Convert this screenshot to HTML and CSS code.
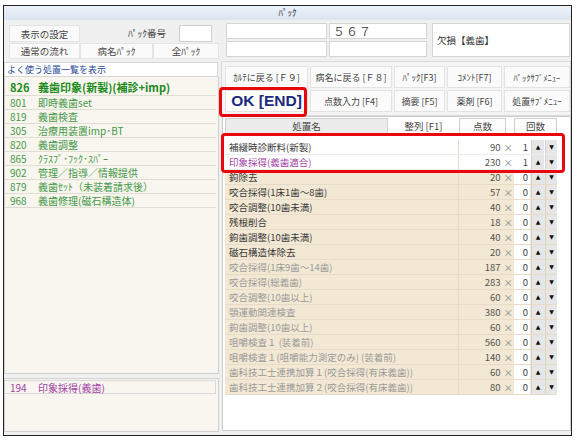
FILE: index.html
```html
<!DOCTYPE html>
<html lang="ja">
<head>
  <meta charset="UTF-8" />
  <title>ﾊﾟｯｸ</title>
  <link rel="stylesheet" href="styles.css">
</head>
<body>
  <div class="window">
    <div class="titlebar">ﾊﾟｯｸ</div>
    <div class="main">

      <div class="left">
        <div class="setrow">
          <div class="cell w71">表示の設定</div>
          <div class="label">ﾊﾟｯｸ番号</div>
          <div class="input"></div>
        </div>
        <div class="setrow second">
          <div class="cell w71">通常の流れ</div>
          <div class="cell w73">病名ﾊﾟｯｸ</div>
          <div class="cell w66">全ﾊﾟｯｸ</div>
        </div>
        <div class="linkbar">よく使う処置一覧を表示</div>

        <div class="list">
          <div class="item head"><span class="code">826</span><span>義歯印象(新製)(補診+imp)</span></div>
          <div class="item"><span class="code">801</span><span>即時義歯set</span></div>
          <div class="item"><span class="code">819</span><span>義歯検査</span></div>
          <div class="item"><span class="code">305</span><span>治療用装置imp･BT</span></div>
          <div class="item"><span class="code">820</span><span>義歯調整</span></div>
          <div class="item"><span class="code">865</span><span>ｸﾗｽﾌﾟ･ﾌｯｸ･ｽﾊﾟｰ</span></div>
          <div class="item"><span class="code">902</span><span>管理／指導／情報提供</span></div>
          <div class="item"><span class="code">879</span><span>義歯ｾｯﾄ（未装着請求後）</span></div>
          <div class="item"><span class="code">968</span><span>義歯修理(磁石構造体)</span></div>
        </div>

        <div class="sublist">
          <div class="item picked"><span class="code">194</span><span>印象採得(義歯)</span></div>
        </div>
      </div>

      <div class="right">
        <div class="fields">
          <div class="box"></div>
          <div class="box num">５６７</div>
          <div class="box big">欠損【義歯】</div>
          <div class="box"></div>
          <div class="box"></div>
        </div>

        <div class="buttons">
          <div class="btn">ｶﾙﾃに戻る [Ｆ９]</div>
          <div class="btn">病名に戻る [Ｆ８]</div>
          <div class="btn">ﾊﾟｯｸ[F3]</div>
          <div class="btn">ｺﾒﾝﾄ[F7]</div>
          <div class="btn small">ﾊﾟｯｸｻﾌﾞﾒﾆｭｰ</div>
          <div class="btn ok">OK [END]</div>
          <div class="btn">点数入力 [F4]</div>
          <div class="btn">摘要 [F5]</div>
          <div class="btn">薬剤 [F6]</div>
          <div class="btn">処置ｻﾌﾞﾒﾆｭｰ</div>
        </div>

        <div class="sheet">
          <div class="thead">
            <div class="th name">処置名</div>
            <div class="th plain">整列 [F1]</div>
            <div class="th pts">点数</div>
            <div class="th cnt">回数</div>
          </div>
          <div class="rows">
            <div class="trow sel"><span class="tname">補綴時診断料(新製)</span><span class="tpts">90<i>×</i></span><span class="tcnt">1</span><span class="arr">▲</span><span class="arr">▼</span></div>
            <div class="trow sel purple"><span class="tname">印象採得(義歯適合)</span><span class="tpts">230<i>×</i></span><span class="tcnt">1</span><span class="arr">▲</span><span class="arr">▼</span></div>
            <div class="trow"><span class="tname">鉤除去</span><span class="tpts">20<i>×</i></span><span class="tcnt">0</span><span class="arr">▲</span><span class="arr">▼</span></div>
            <div class="trow"><span class="tname">咬合採得(1床1歯～8歯)</span><span class="tpts">57<i>×</i></span><span class="tcnt">0</span><span class="arr">▲</span><span class="arr">▼</span></div>
            <div class="trow"><span class="tname">咬合調整(10歯未満)</span><span class="tpts">40<i>×</i></span><span class="tcnt">0</span><span class="arr">▲</span><span class="arr">▼</span></div>
            <div class="trow"><span class="tname">残根削合</span><span class="tpts">18<i>×</i></span><span class="tcnt">0</span><span class="arr">▲</span><span class="arr">▼</span></div>
            <div class="trow"><span class="tname">鉤歯調整(10歯未満)</span><span class="tpts">40<i>×</i></span><span class="tcnt">0</span><span class="arr">▲</span><span class="arr">▼</span></div>
            <div class="trow"><span class="tname">磁石構造体除去</span><span class="tpts">20<i>×</i></span><span class="tcnt">0</span><span class="arr">▲</span><span class="arr">▼</span></div>
            <div class="trow off"><span class="tname">咬合採得(1床9歯～14歯)</span><span class="tpts">187<i>×</i></span><span class="tcnt">0</span><span class="arr">▲</span><span class="arr">▼</span></div>
            <div class="trow off"><span class="tname">咬合採得(総義歯)</span><span class="tpts">283<i>×</i></span><span class="tcnt">0</span><span class="arr">▲</span><span class="arr">▼</span></div>
            <div class="trow off"><span class="tname">咬合調整(10歯以上)</span><span class="tpts">60<i>×</i></span><span class="tcnt">0</span><span class="arr">▲</span><span class="arr">▼</span></div>
            <div class="trow off"><span class="tname">顎運動関連検査</span><span class="tpts">380<i>×</i></span><span class="tcnt">0</span><span class="arr">▲</span><span class="arr">▼</span></div>
            <div class="trow off"><span class="tname">鉤歯調整(10歯以上)</span><span class="tpts">60<i>×</i></span><span class="tcnt">0</span><span class="arr">▲</span><span class="arr">▼</span></div>
            <div class="trow off"><span class="tname">咀嚼検査１ (装着前)</span><span class="tpts">560<i>×</i></span><span class="tcnt">0</span><span class="arr">▲</span><span class="arr">▼</span></div>
            <div class="trow off"><span class="tname">咀嚼検査１(咀嚼能力測定のみ) (装着前)</span><span class="tpts">140<i>×</i></span><span class="tcnt">0</span><span class="arr">▲</span><span class="arr">▼</span></div>
            <div class="trow off"><span class="tname">歯科技工士連携加算１(咬合採得(有床義歯))</span><span class="tpts">60<i>×</i></span><span class="tcnt">0</span><span class="arr">▲</span><span class="arr">▼</span></div>
            <div class="trow off"><span class="tname">歯科技工士連携加算２(咬合採得(有床義歯))</span><span class="tpts">80<i>×</i></span><span class="tcnt">0</span><span class="arr">▲</span><span class="arr">▼</span></div>
          </div>
        </div>

        <!-- red highlight frames -->
        <div class="mark mark-ok"></div>
        <div class="mark mark-rows"></div>
      </div>

    </div>
  </div>
</body>
</html>
```

FILE: styles.css
```css
* { box-sizing: border-box; }
body {
  margin: 0;
  padding: 5px 0 0 3px;
  background: #fff;
  font-family: "Noto Sans CJK JP", sans-serif;
  font-size: 9.5px;
  color: #333;
}
.window {
  width: 569px;
  height: 431px;
  border: 1px solid #222;
  background: #f0f0f0;
  display: flex;
  flex-direction: column;
}
.titlebar {
  height: 14px;
  line-height: 14px;
  text-align: center;
  font-size: 9px;
  color: #333;
  background: linear-gradient(#edf2f9, #d9e4f1);
}
.main {
  flex: 1;
  display: flex;
}

/* left side */
.left {
  width: 216px;
  display: flex;
  flex-direction: column;
}
.setrow {
  display: flex;
  height: 17px;
  margin-top: 5px;
  padding-left: 5px;
}
.setrow.second {
  height: 16px;
  margin-top: 1px;
}
.cell {
  background: #fafafa;
  border: 1px solid #e4e4e4;
  display: flex;
  align-items: center;
  justify-content: center;
  color: #444;
}
.w71 { width: 71px; }
.w73 { width: 73px; }
.w66 { width: 66px; }
.label {
  width: 99px;
  text-align: right;
  padding-right: 13px;
  line-height: 17px;
  color: #444;
}
.input {
  width: 33px;
  background: #fff;
  border: 1px solid #cfcfcf;
}
.linkbar {
  margin-top: 3px;
  height: 15px;
  width: 214px;
  background: #fff;
  border: 1px solid #d6d6d6;
  line-height: 14px;
  padding-left: 2px;
  font-size: 9px;
  color: #2b4a9a;
}
.list {
  height: 297px;
  width: 215px;
  background: #f8f6ee;
  border: 1px solid #d0d0d0;
  border-top: none;
  padding-right: 2px;
}
.item {
  height: 14px;
  display: flex;
  align-items: center;
  padding-left: 5px;
  border-bottom: 1px solid #e0ddd3;
  font-size: 10px;
  color: #46984a;
}
.item.head {
  height: 19px;
  padding-top: 1px;
  font-size: 11px;
  font-weight: bold;
  color: #1c8a1c;
}
.code { width: 28px; }
.sublist {
  margin-top: 4px;
  height: 54px;
  width: 215px;
  background: #f8f6ee;
  border: 1px solid #d0d0d0;
  padding: 1px 2px 0 0;
}
.item.picked {
  color: #a33fa8;
  border: 1px solid #d8d8d8;
  border-left: none;
}

/* right side */
.right {
  position: relative;
  width: 351px;
  display: flex;
  flex-direction: column;
}
.fields {
  margin-top: 3px;
  padding-left: 6px;
  display: grid;
  grid-template-columns: 101px 98px 141px;
  grid-template-rows: 16px 16px;
  column-gap: 2px;
  row-gap: 2px;
}
.box {
  background: #fff;
  border: 1px solid #d4d4d4;
}
.box.num {
  font-size: 12px;
  letter-spacing: 1px;
  color: #555;
  padding-left: 3px;
  line-height: 14px;
}
.box.big {
  grid-column: 3;
  grid-row: 1 / span 2;
  margin-left: 3px;
  display: flex;
  align-items: center;
  padding-left: 4px;
  font-size: 9.5px;
  color: #333;
}
.buttons {
  margin: 4px 0 0 1px;
  height: 55px;
  background: #f4f4f4;
  border: 1px solid #dadada;
  padding: 4px 0 0 3px;
  display: grid;
  grid-template-columns: 83px 82px 51px 55px 66px;
  grid-template-rows: 22px 22px;
  column-gap: 2px;
  row-gap: 2px;
}
.btn {
  background: #fbfbfb;
  border: 1px solid #e3e3e3;
  display: flex;
  align-items: center;
  justify-content: center;
  color: #444;
  white-space: nowrap;
  font-size: 9px;
}
.btn.small { font-size: 8.5px; }
.btn.ok {
  font-family: "Liberation Sans", Arial, sans-serif;
  font-size: 15.5px;
  font-weight: bold;
  color: #1b2a7c;
  background: #fff;
}
.sheet {
  margin-left: 2px;
  height: 315px;
  background: #fff;
  border: 1px solid #cdcdcd;
  padding: 1px 0 0 2px;
}
.thead {
  display: grid;
  grid-template-columns: 163px 71px 47px 43px;
  height: 15px;
}
.th {
  display: flex;
  align-items: center;
  justify-content: center;
  color: #444;
}
.th.name {
  background: #ececec;
  border: 1px solid #d2d2d2;
}
.th.pts {
  border: 1px solid #cfcfcf;
  background: #fdfdfd;
}
.th.cnt {
  margin-left: 8px;
  width: 43px;
  border: 1px solid #cfcfcf;
  background: #fdfdfd;
}
.rows {
  margin-top: 7px;
}
.trow {
  display: grid;
  grid-template-columns: 234px 55px 16px 14px 13px;
  height: 15px;
  width: 332px;
  line-height: 14px;
  background: #f2e8d3;
  border-bottom: 1px solid #e6dcc8;
  color: #3a3a3a;
}
.trow.sel {
  background: #fff;
  border-bottom-color: #ececec;
}
.trow.purple .tname { color: #a33fa8; }
.trow.off .tname { color: #9a9a9a; }
.tname {
  padding-left: 4px;
  white-space: nowrap;
  overflow: hidden;
  border-right: 1px solid #e4dccb;
}
.tpts {
  text-align: right;
  color: #555;
  padding-right: 1px;
}
.tpts i {
  font-style: normal;
  color: #888;
  margin-left: 3px;
}
.tcnt {
  background: #fff;
  text-align: right;
  padding-right: 2px;
  color: #444;
}
.arr {
  margin-left: 1px;
  background: #e6e6e6;
  border-left: 1px solid #d2d2d2;
  text-align: center;
  font-family: "DejaVu Sans", sans-serif;
  font-size: 6px;
  line-height: 14px;
  color: #111;
}

.mark {
  position: absolute;
  border: 3px solid #e8080c;
  border-radius: 4px;
}
.mark-ok {
  left: -1px;
  top: 67px;
  width: 88px;
  height: 30px;
}
.mark-rows {
  left: 1px;
  top: 113px;
  width: 344px;
  height: 40px;
}
```
